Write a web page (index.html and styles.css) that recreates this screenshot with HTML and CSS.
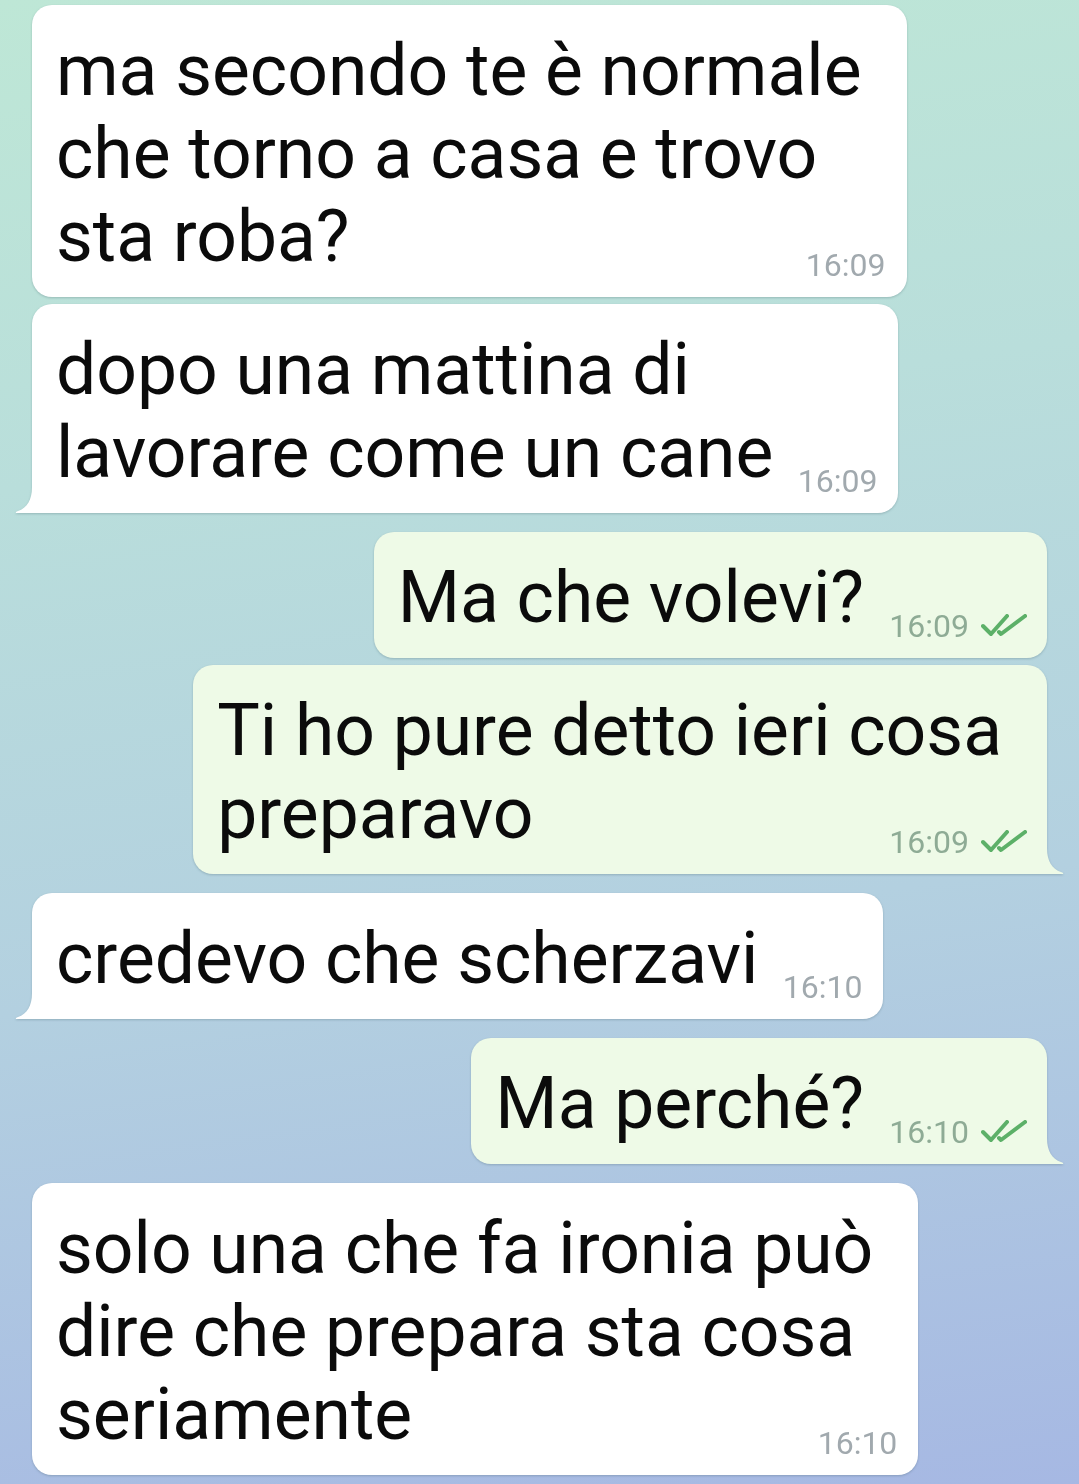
FILE: index.html
```html
<!DOCTYPE HTML>
<html>

<head>
    <meta charset="UTF-8">
    <title>Chat</title>
    <link rel="stylesheet" href="styles.css">
</head>

<body>
    <div class="chat">
        <div class="group in">
            <div class="bubble">ma secondo te è normale<br>che torno a casa e trovo<br>sta roba?<span class="spacer"></span>
                <span class="meta">16:09</span>
            </div>
            <div class="bubble tailed">dopo una mattina di<br>lavorare come un cane<span class="spacer"></span>
                <span class="meta">16:09</span>
                <svg class="tail" viewBox="0 0 17 26"><path d="M17 0 C17 13 12 21 3 24 Q0 25 1 26 L17 26 Z"/></svg>
            </div>
        </div>
        <div class="group out">
            <div class="bubble">Ma che volevi?<span class="spacer"></span>
                <span class="meta">16:09<svg class="ticks" viewBox="0 0 46 23"><path d="M2 12 L10 20 L26 2 M18 18 L20 20 L44 2"/></svg></span>
            </div>
            <div class="bubble tailed">Ti ho pure detto ieri cosa<br>preparavo<span class="spacer"></span>
                <span class="meta">16:09<svg class="ticks" viewBox="0 0 46 23"><path d="M2 12 L10 20 L26 2 M18 18 L20 20 L44 2"/></svg></span>
                <svg class="tail" viewBox="0 0 17 26"><path d="M0 0 C0 13 5 21 14 24 Q17 25 16 26 L0 26 Z"/></svg>
            </div>
        </div>
        <div class="group in">
            <div class="bubble tailed">credevo che scherzavi<span class="spacer"></span>
                <span class="meta">16:10</span>
                <svg class="tail" viewBox="0 0 17 26"><path d="M17 0 C17 13 12 21 3 24 Q0 25 1 26 L17 26 Z"/></svg>
            </div>
        </div>
        <div class="group out">
            <div class="bubble tailed">Ma perché?<span class="spacer"></span>
                <span class="meta">16:10<svg class="ticks" viewBox="0 0 46 23"><path d="M2 12 L10 20 L26 2 M18 18 L20 20 L44 2"/></svg></span>
                <svg class="tail" viewBox="0 0 17 26"><path d="M0 0 C0 13 5 21 14 24 Q17 25 16 26 L0 26 Z"/></svg>
            </div>
        </div>
        <div class="group in">
            <div class="bubble">solo una che fa ironia può<br>dire che prepara sta cosa<br>seriamente<span class="spacer"></span>
                <span class="meta">16:10</span>
            </div>
        </div>
    </div>
</body>

</html>
```

FILE: styles.css
```css
html, body {
    margin: 0;
    height: 100%;
}

body {
    font-family: Roboto, "Liberation Sans", sans-serif;
    background: linear-gradient(172deg, #bee7d6 0%, #b9dedb 30%, #b3d0e0 62%, #a6b8e3 100%);
    overflow: hidden;
}

.chat {
    display: flex;
    flex-direction: column;
    gap: 19px;
    padding: 5px 32px 0;
}

.group {
    display: flex;
    flex-direction: column;
    gap: 7px;
}

.group.in {
    align-items: flex-start;
}

.group.out {
    align-items: flex-end;
}

.bubble {
    position: relative;
    padding: 24px 45px 19px 24px;
    font-size: 71.4px;
    line-height: 83px;
    color: #0b0b0b;
    background-color: #ffffff;
    border-radius: 20px;
    white-space: nowrap;
    filter: drop-shadow(0 1px 1px rgba(40, 70, 80, 0.25));
}

.out .bubble {
    background-color: #eefae7;
}

.in .bubble.tailed {
    border-bottom-left-radius: 0;
}

.out .bubble.tailed {
    border-bottom-right-radius: 0;
}

/* keeps room on the last line for the time */
.spacer {
    display: inline-block;
    width: 80px;
}

.out .spacer {
    width: 138px;
}

.meta {
    position: absolute;
    right: 21px;
    bottom: 20px;
    font-size: 32px;
    line-height: 24px;
    color: #a1a9ae;
    white-space: nowrap;
}

.out .meta {
    right: 20px;
    color: #8eab95;
}

.ticks {
    width: 46px;
    height: 23px;
    margin-left: 12px;
    fill: none;
    stroke: #5cb068;
    stroke-width: 4;
    stroke-linecap: round;
    stroke-linejoin: round;
}

.tail {
    position: absolute;
    bottom: 0;
    width: 17px;
    height: 26px;
}

.in .tail {
    left: -17px;
    fill: #ffffff;
}

.out .tail {
    right: -17px;
    fill: #eefae7;
}
```
